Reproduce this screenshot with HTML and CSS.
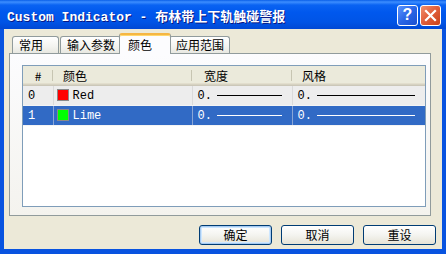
FILE: index.html
```html
<!DOCTYPE html>
<html lang="en">
<head>
  <meta charset="UTF-8">
  <title>Custom Indicator</title>
  <link rel="stylesheet" href="styles.css">
</head>
<body>

  <div class="window">
    <div class="titlebar">
      <span class="title">Custom Indicator - 布林带上下轨触碰警报</span>
      <div class="caption-btns">
        <span class="cap-btn help">?</span>
        <span class="cap-btn close">
          <svg width="13" height="13" viewBox="0 0 13 13"><path d="M2 2 L11 11 M11 2 L2 11" stroke="#fff" stroke-width="2.2" stroke-linecap="square"/></svg>
        </span>
      </div>
    </div>

    <div class="client">
      <!-- Tabs -->
      <div class="tabs">
        <span class="tab">常用</span>
        <span class="tab">输入参数</span>
        <span class="tab active">颜色</span>
        <span class="tab">应用范围</span>
      </div>

      <div class="panel">
        <div class="listview">
          <table>
            <colgroup>
              <col class="c-num">
              <col class="c-color">
              <col class="c-width">
              <col>
            </colgroup>
            <thead>
              <tr>
                <th class="center">#</th>
                <th>颜色</th>
                <th>宽度</th>
                <th>风格</th>
              </tr>
            </thead>
            <tbody>
              <tr class="hot">
                <td>0</td>
                <td><span class="swatch red"></span>Red</td>
                <td><div class="val">0.<span class="line"></span></div></td>
                <td><div class="val">0.<span class="line"></span></div></td>
              </tr>
              <tr class="selected">
                <td>1</td>
                <td><span class="swatch lime"></span>Lime</td>
                <td><div class="val">0.<span class="line"></span></div></td>
                <td><div class="val">0.<span class="line"></span></div></td>
              </tr>
            </tbody>
          </table>
        </div>
      </div>

      <div class="buttons">
        <button type="button" class="default">确定</button>
        <button type="button">取消</button>
        <button type="button">重设</button>
      </div>
    </div>
  </div>

</body>
</html>
```

FILE: styles.css
```css
body {
  margin: 0;
  font-family: 'Noto Sans CJK SC', sans-serif;
  font-size: 12px;
  color: #000;
  background: #0055e5;
}

.window {
  width: 446px;
  height: 254px;
  display: flex;
  flex-direction: column;
  background: #0853e0;
  box-sizing: border-box;
}

/* Title bar */
.titlebar {
  height: 29px;
  flex: none;
  display: flex;
  align-items: center;
  justify-content: space-between;
  padding: 0 5px 0 7px;
  background: linear-gradient(#0a5fe8 0, #3d8eff 2px, #0a63f2 5px, #0058ee 12px, #0054e6 22px, #0048d4 29px);
}

.title {
  font-family: 'Liberation Mono', 'Noto Sans CJK SC', monospace;
  font-weight: bold;
  font-size: 13px;
  color: #fff;
  text-shadow: 1px 1px 0 #0a1883;
  white-space: nowrap;
  margin-top: 1px;
}

.caption-btns {
  display: flex;
  gap: 2px;
  margin-top: 1px;
}

.cap-btn {
  width: 19px;
  height: 19px;
  border: 1px solid #fff;
  border-radius: 3px;
  display: flex;
  align-items: center;
  justify-content: center;
  color: #fff;
}

.cap-btn.help {
  background: linear-gradient(135deg, #5c95ff 0%, #2a66e6 50%, #1a4fd0 100%);
  font-family: 'Liberation Sans', sans-serif;
  font-weight: bold;
  font-size: 16px;
}

.cap-btn.close {
  background: linear-gradient(135deg, #f0906e 0%, #e2603d 45%, #c94218 100%);
}

/* Client area */
.client {
  flex: 1;
  margin: 0 4px 5px;
  background: #ece9d8;
  display: flex;
  flex-direction: column;
}

.tabs {
  display: flex;
  align-items: flex-end;
  height: 19px;
  margin: 5px 0 0 8px;
  position: relative;
  z-index: 1;
}

.tab {
  height: 16px;
  line-height: 16px;
  padding: 0 5px 0 6px;
  min-width: 34px;
  border: 1px solid #919b9c;
  border-bottom: none;
  border-radius: 3px 3px 0 0;
  background: linear-gradient(#ffffff, #f3f3ef 60%, #e8e8e1);
  margin-right: 1px;
}

.tab.active {
  height: 19px;
  line-height: 20px;
  margin: 0 -2px 0 -3px;
  padding: 0 8px 0 8px;
  background: #fcfcfe;
  border-top: 2px solid #f5b643;
  box-shadow: inset 0 1px 0 #ffd76b;
  position: relative;
  top: 1px;
}

.panel {
  width: 422px;
  height: 163px;
  box-sizing: border-box;
  margin-left: 5px;
  border: 1px solid #919b9c;
  background: linear-gradient(#fcfcfe, #f4f3ee);
  padding: 11px 4px 8px 12px;
}

.listview {
  height: 142px;
  box-sizing: border-box;
  border: 1px solid #7f9db9;
  background: #fff;
}

table {
  width: 100%;
  border-collapse: collapse;
  table-layout: fixed;
}

col.c-num { width: 30px; }
col.c-color { width: 139px; }
col.c-width { width: 100px; }

th {
  height: 20px;
  padding: 0 0 2px 10px;
  box-sizing: border-box;
  text-align: left;
  font-weight: normal;
  background: #ebeadb;
  box-shadow: inset 0 -1px 0 #cbc7b8, inset 0 -2px 0 #d6d2c2, inset 0 -3px 0 #e2decd;
  position: relative;
  white-space: nowrap;
}

th:nth-child(3) { padding-left: 12px; }

th.center {
  text-align: center;
  padding-left: 0;
}

th::after {
  content: '';
  position: absolute;
  right: 0;
  top: 4px;
  bottom: 5px;
  width: 1px;
  background: #c7c5b2;
}

th:last-child::after {
  display: none;
}

td {
  height: 19px;
  padding: 0 0 0 5px;
  border-right: 1px solid #dadada;
  border-bottom: 1px solid #f4f4f4;
  font-family: 'Liberation Mono', monospace;
  font-size: 12px;
  white-space: nowrap;
  vertical-align: middle;
}

td:nth-child(2) { padding-left: 3px; }

td:last-child { border-right: none; }

tr.hot td {
  background: #ededed;
}

tr.selected td {
  background: #316ac5;
  color: #fff;
  border-right-color: #8aa6d6;
}

.swatch {
  display: inline-block;
  width: 10px;
  height: 10px;
  border: 1px solid #8a8a8a;
  vertical-align: -2px;
  margin-right: 4px;
}

.swatch.red { background: #ff0000; }
.swatch.lime { background: #00ff00; }

.val {
  display: flex;
  align-items: center;
  padding-right: 10px;
}

.line {
  flex: 1;
  height: 1px;
  margin-left: 5px;
  background: #000;
}

tr.selected .line {
  background: #fff;
}

/* Dialog buttons */
.buttons {
  display: flex;
  justify-content: flex-end;
  gap: 9px;
  margin: 9px 6px 0 0;
}

button {
  width: 73px;
  height: 20px;
  padding: 0;
  border: 1px solid #003c74;
  border-radius: 3px;
  background: linear-gradient(#ffffff, #f4f4f0 50%, #e6e3d6);
  font-family: 'Noto Sans CJK SC', sans-serif;
  font-size: 12px;
  line-height: 16px;
  color: #000;
}

button.default {
  box-shadow: inset 0 0 0 1px #a6caf0, inset 0 0 0 2px #cee7ff;
}
```
